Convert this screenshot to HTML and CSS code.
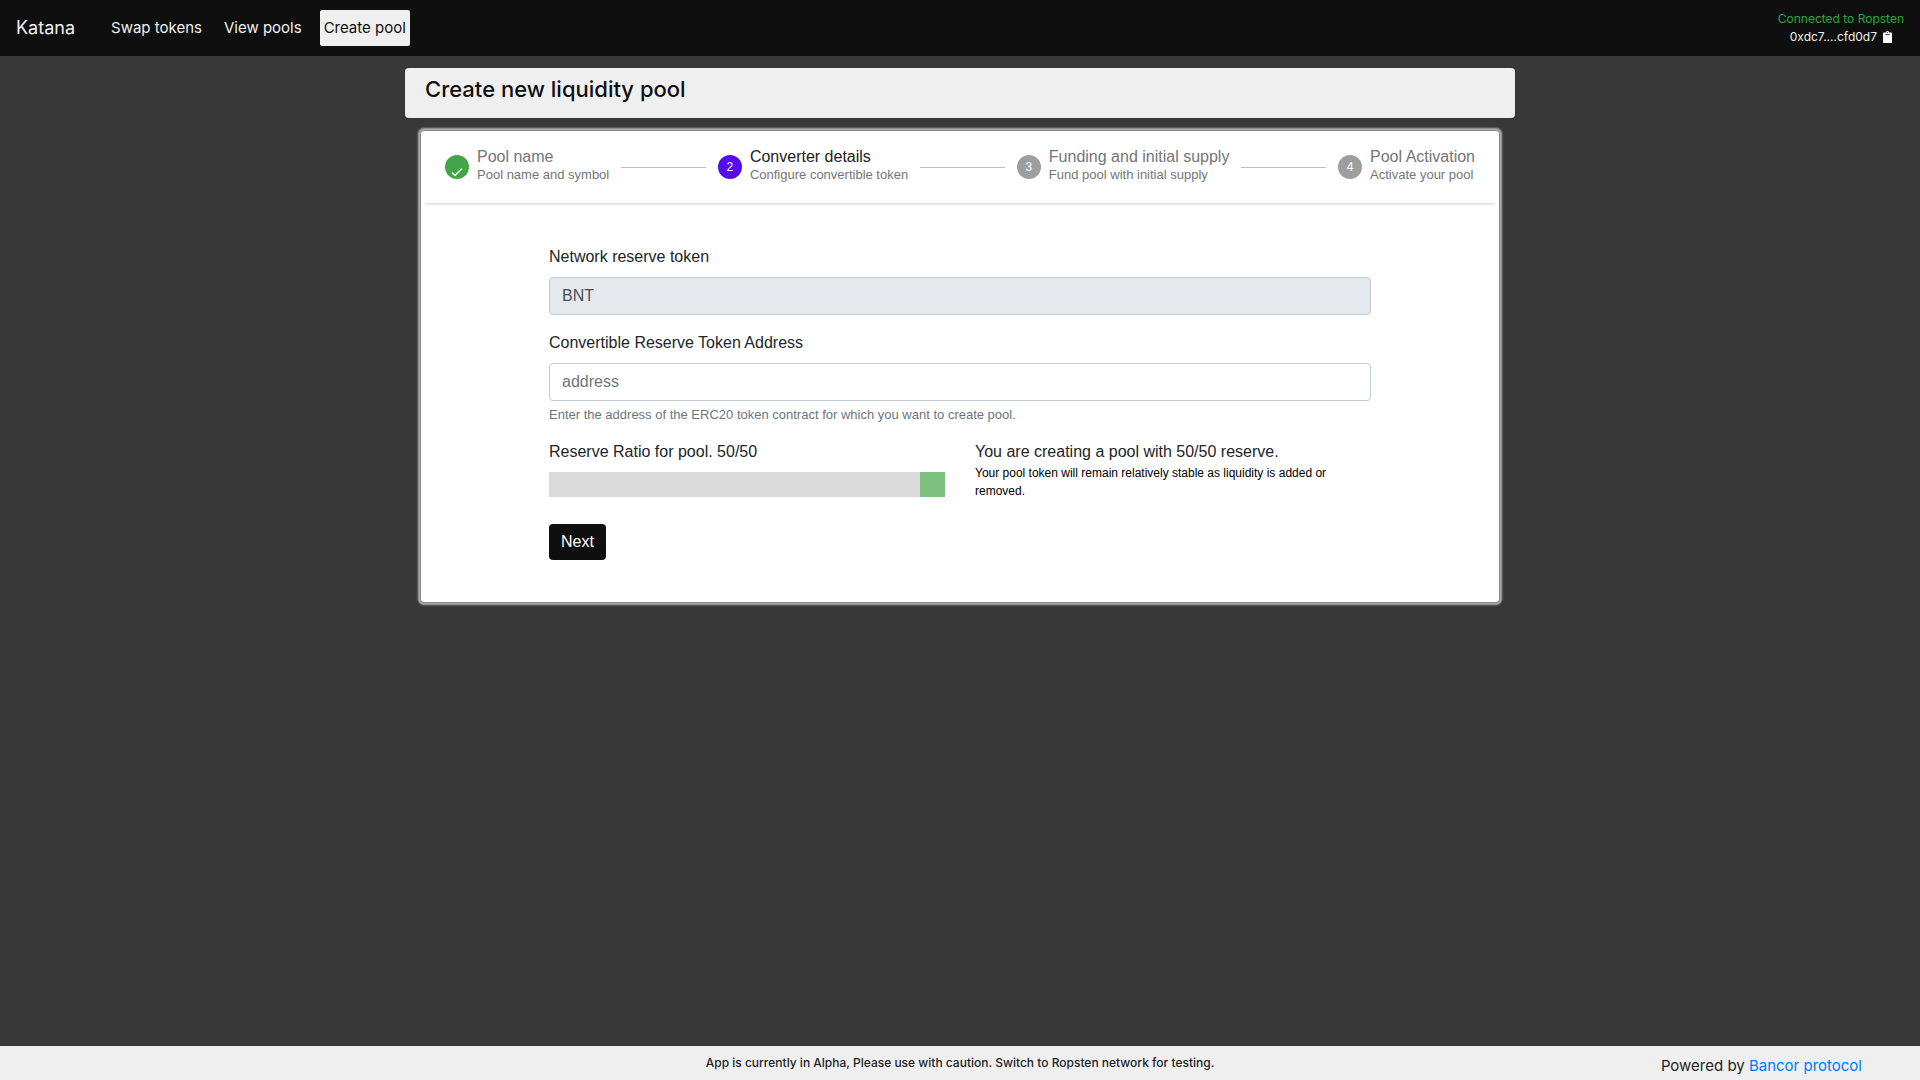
FILE: index.html
```html
<!DOCTYPE html>
<html lang="en">
<head>
<meta charset="utf-8">
<meta name="viewport" content="width=device-width, initial-scale=1">
<title>Katana - Create pool</title>
<link rel="stylesheet" href="styles.css">
</head>
<body>
<header class="navbar">
  <a class="brand" href="#">Katana</a>
  <nav class="nav">
    <a class="nav-link" href="#">Swap tokens</a>
    <a class="nav-link" href="#">View pools</a>
    <a class="nav-link active" href="#">Create pool</a>
  </nav>
  <div class="account">
    <div class="network">Connected to Ropsten</div>
    <div class="address">
      <span>0xdc7....cfd0d7</span>
      <button class="copy" type="button" aria-label="Copy address">
        <svg width="9" height="12" viewBox="0 0 384 512" fill="#fff" aria-hidden="true"><path d="M384 112v352c0 26.500-21.500 48-48 48H48c-26.500 0-48-21.500-48-48V112c0-26.500 21.500-48 48-48h80c0-35.300 28.700-64 64-64s64 28.700 64 64h80c26.500 0 48 21.500 48 48zM192 40c-13.300 0-24 10.700-24 24s10.700 24 24 24 24-10.700 24-24-10.700-24-24-24m96 114v-20a6 6 0 0 0-6-6H102a6 6 0 0 0-6 6v20a6 6 0 0 0 6 6h180a6 6 0 0 0 6-6z"/></svg>
      </button>
    </div>
  </div>
</header>
<main class="container">
  <h1 class="page-title">Create new liquidity pool</h1>
  <section class="card">
    <ol class="stepper">
      <li class="step">
        <span class="marker done"><svg width="12" height="12" viewBox="0 0 12 12" fill="none" stroke="#fff" stroke-width="1.300" aria-hidden="true"><path d="M1 7.500l3 3L11 3.500"/></svg></span>
        <span class="step-text"><span class="step-title">Pool name</span><span class="step-note">Pool name and symbol</span></span>
      </li>
      <li class="line" aria-hidden="true"></li>
      <li class="step current" aria-current="step">
        <span class="marker">2</span>
        <span class="step-text"><span class="step-title">Converter details</span><span class="step-note">Configure convertible token</span></span>
      </li>
      <li class="line" aria-hidden="true"></li>
      <li class="step">
        <span class="marker">3</span>
        <span class="step-text"><span class="step-title">Funding and initial supply</span><span class="step-note">Fund pool with initial supply</span></span>
      </li>
      <li class="line" aria-hidden="true"></li>
      <li class="step">
        <span class="marker">4</span>
        <span class="step-text"><span class="step-title">Pool Activation</span><span class="step-note">Activate your pool</span></span>
      </li>
    </ol>
    <form class="form">
      <div class="group">
        <label for="network">Network reserve token</label>
        <input class="control" id="network" type="text" value="BNT" disabled>
      </div>
      <div class="group">
        <label for="token">Convertible Reserve Token Address</label>
        <input class="control" id="token" type="text" placeholder="address" aria-describedby="token-help">
        <small class="help" id="token-help">Enter the address of the ERC20 token contract for which you want to create pool.</small>
      </div>
      <div class="columns">
        <div class="ratio">
          <label for="ratio">Reserve Ratio for pool. 50/50</label>
          <input class="slider" id="ratio" type="range" min="0" max="50" value="50">
        </div>
        <div class="summary">
          <p class="summary-title">You are creating a pool with 50/50 reserve.</p>
          <p class="summary-text">Your pool token will remain relatively stable as liquidity is added or removed.</p>
        </div>
      </div>
      <button class="next" type="button">Next</button>
    </form>
  </section>
</main>
<footer class="footer">
  <p class="notice">App is currently in Alpha, Please use with caution. Switch to Ropsten network for testing.</p>
  <p class="powered">Powered by <a href="#">Bancor protocol</a></p>
</footer>
</body>
</html>
```
FILE: styles.css
```css
* {
  box-sizing: border-box;
}

body {
  margin: 0;
  min-height: 100vh;
  display: flex;
  flex-direction: column;
  background: #383838;
  color: #212529;
  font-family: Inter, sans-serif;
  font-size: 16px;
  line-height: 24px;
}

p,
h1,
ol {
  margin: 0;
  padding: 0;
}

a {
  color: #007bff;
  text-decoration: none;
}

.navbar {
  display: flex;
  align-items: center;
  min-height: 56px;
  padding: 0 16px;
  background: #0f0f0f;
  color: #efefef;
}

.brand {
  margin-right: 32px;
  color: #efefef;
  font-size: 18px;
}

.nav {
  display: flex;
  gap: 14px;
}

.nav-link {
  padding: 6px 4px;
  border-radius: 2px;
  color: #efefef;
  font-size: 15px;
}

.nav-link.active {
  background: #efefef;
  color: #0f0f0f;
}

.account {
  margin-left: auto;
  font-size: 12px;
  line-height: 18px;
}

.network {
  color: #28a745;
}

.address {
  display: flex;
  align-items: center;
  justify-content: center;
  gap: 6px;
}

.copy {
  display: flex;
  padding: 0;
  border: 0;
  background: none;
}

.container {
  flex: 1;
  width: 100%;
  max-width: 1110px;
  margin: 0 auto;
  padding: 12px 0;
}

.page-title {
  min-height: 50px;
  padding: 6px 20px;
  border-radius: 4px;
  background: #efefef;
  color: #0f0f0f;
  font-size: 22px;
  font-weight: 500;
  line-height: 30px;
}

.card {
  margin: 12px 15px;
  border: 1px solid #888;
  border-radius: 4px;
  background: #fff;
  box-shadow: 0 0 2px 2px #b0b0b0;
  font-family: "Liberation Sans", sans-serif;
}

.stepper {
  display: flex;
  align-items: center;
  min-height: 72px;
  margin: 0 3px;
  padding: 0 21px;
  list-style: none;
  box-shadow: 0 3px 3px -2px rgba(0, 0, 0, 0.2);
}

.step {
  display: flex;
  align-items: center;
  gap: 8px;
  color: #757575;
}

.marker {
  display: flex;
  align-items: center;
  justify-content: center;
  width: 24px;
  height: 24px;
  border-radius: 50%;
  background: #9e9e9e;
  color: #fff;
  font-size: 12px;
}

.marker.done {
  padding-top: 8px;
  background: #43a547;
}

.current .marker {
  background: #560bec;
}

.current .step-title {
  color: #212121;
}

.step-text {
  display: flex;
  flex-direction: column;
  padding-bottom: 2px;
}

.step-title {
  font-size: 16px;
  line-height: 18px;
}

.step-note {
  font-size: 13px;
  line-height: 18px;
}

.line {
  flex: 1;
  height: 1px;
  margin: 0 12px;
  background: #bdbdbd;
}

.form {
  max-width: 822px;
  margin: 0 auto;
  padding: 42px 0;
}

.group {
  margin-bottom: 16px;
}

label {
  display: block;
  margin-bottom: 8px;
}

.control {
  display: block;
  width: 100%;
  height: 38px;
  padding: 6px 12px;
  border: 1px solid #c3cad6;
  border-radius: 4px;
  background: #fff;
  color: #495057;
  font: inherit;
}

.control:disabled {
  background: #e5e8ed;
}

.control::placeholder {
  color: #6c757d;
  opacity: 1;
}

.help {
  display: block;
  margin-top: 4px;
  color: #6c757d;
  font-size: 13px;
  line-height: 19px;
}

.columns {
  display: grid;
  grid-template-columns: 1fr 1fr;
  gap: 30px;
}

.slider {
  display: block;
  width: 100%;
  height: 25px;
  margin: 0;
  appearance: none;
  background: #dadada;
}

.slider::-webkit-slider-thumb {
  appearance: none;
  width: 25px;
  height: 25px;
  background: #7dc181;
}

.slider::-moz-range-thumb {
  width: 25px;
  height: 25px;
  border: 0;
  border-radius: 0;
  background: #7dc181;
}

.summary-text {
  padding-right: 24px;
  color: #000;
  font-size: 12px;
  line-height: 18px;
}

.next {
  margin-top: 24px;
  padding: 6px 12px;
  border: 0;
  border-radius: 4px;
  background: #0f0f0f;
  color: #fff;
  font: inherit;
}

.footer {
  display: grid;
  grid-template-columns: 1fr auto 1fr;
  min-height: 34px;
  background: #efefef;
}

.notice {
  grid-column: 2;
  padding-top: 8px;
  font-size: 12px;
  font-weight: 500;
  line-height: 18px;
}

.powered {
  justify-self: end;
  padding: 8px 58px 0 0;
  font-size: 15px;
}
```
